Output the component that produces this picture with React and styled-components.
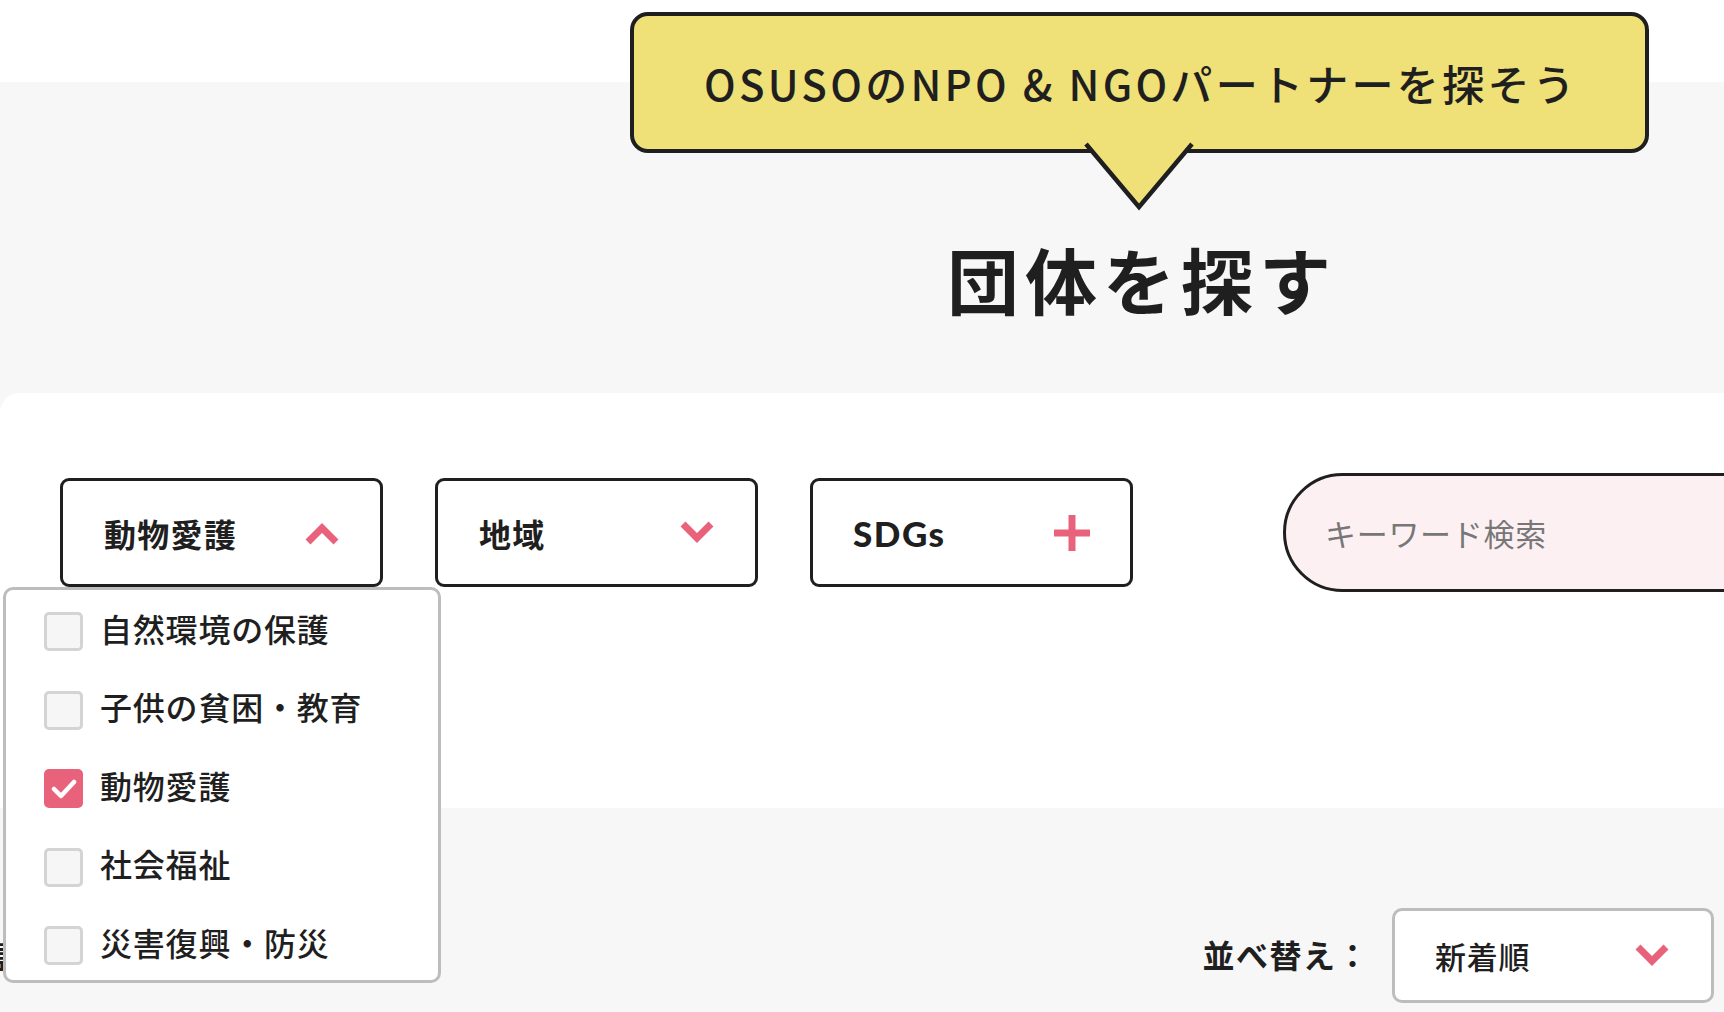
import React from 'react';
import styled, { createGlobalStyle } from 'styled-components';

const PINK = '#e9627b';
const INK = '#1f1f1f';

const Global = createGlobalStyle`
  html, body { margin: 0; padding: 0; }
  body {
    background: #f7f7f7;
    font-family: "Noto Sans CJK JP", "Noto Sans", sans-serif;
    color: ${INK};
  }
  * { box-sizing: border-box; }
`;

const Page = styled.div`
  width: 1724px;
  height: 1012px;
  overflow: hidden;
  background: #f7f7f7;
`;

const Hero = styled.header`
  display: flex;
  flex-direction: column;
  align-items: center;
  padding: 12px 0 79px 554px;
  background: linear-gradient(to bottom, #fff 0, #fff 82px, #f7f7f7 82px);
`;

const Bubble = styled.div`
  position: relative;
  width: 1019px;
  height: 141px;
  border: 4px solid ${INK};
  border-radius: 18px;
  background: #efe078;
  display: flex;
  align-items: center;
  justify-content: center;
  padding-left: 4px;
  font-size: 42px;
  font-weight: 500;
  letter-spacing: 3.3px;
`;

const Tail = styled.svg`
  position: absolute;
  left: 50%;
  top: calc(100% - 4px);
  transform: translateX(-50%);
  overflow: visible;
`;

const Title = styled.h1`
  margin: 89px 0 0;
  padding-left: 6px;
  font-size: 72px;
  line-height: 1;
  font-weight: 700;
  letter-spacing: 6px;
`;

const Card = styled.section`
  height: 415px;
  background: #fff;
  border-radius: 20px 0 0 0;
  padding: 80px 0 0 60px;
`;

const FilterRow = styled.div`
  display: flex;
  align-items: center;
  gap: 52px;
`;

const FilterWrap = styled.div`
  position: relative;
  flex-shrink: 0;
`;

const FilterButton = styled.div`
  width: 323px;
  height: 109px;
  border: 3px solid ${INK};
  border-radius: 9px;
  background: #fff;
  display: flex;
  align-items: center;
  justify-content: space-between;
  padding: 0 40px 0 ${p => (p.$latin ? '40px' : '41px')};
  font-size: ${p => (p.$latin ? '35px' : '32px')};
  letter-spacing: ${p => (p.$latin ? '1.5px' : '1.3px')};
  font-family: ${p => (p.$latin ? '"Lato", "Noto Sans", sans-serif' : 'inherit')};
  font-weight: ${p => (p.$latin ? 900 : 700)};
`;

const SearchInput = styled.input`
  flex-shrink: 0;
  margin-left: 98px;
  width: 700px;
  height: 119px;
  border: 3px solid ${INK};
  border-radius: 60px;
  background: #fdf0f2;
  padding: 0 0 0 39px;
  font-family: "Noto Sans CJK JP", "Noto Sans", sans-serif;
  font-size: 31px;
  letter-spacing: 0.7px;
  color: ${INK};
  outline: none;
  &::placeholder { color: #777; }
`;

const Panel = styled.div`
  position: absolute;
  left: -57px;
  top: 100%;
  width: 438px;
  height: 396px;
  z-index: 5;
  background: #fff;
  border: 3px solid #bdbdbd;
  border-radius: 10px;
  padding: 22px 0 0 38px;
  display: flex;
  flex-direction: column;
  gap: 39.5px;
`;

const Option = styled.label`
  display: flex;
  align-items: center;
  gap: 17px;
  height: 39px;
  white-space: nowrap;
`;

const OptionText = styled.span`
  font-size: 32px;
  font-weight: 500;
  letter-spacing: 0.8px;
  line-height: 1;
  margin-bottom: 8px;
`;

const Box = styled.span`
  width: 39px;
  height: 39px;
  flex-shrink: 0;
  border-radius: 5px;
  border: 3px solid ${p => (p.$checked ? PINK : '#d4d4d4')};
  background: ${p => (p.$checked ? PINK : '#f6f6f6')};
  display: flex;
  align-items: center;
  justify-content: center;
`;

const SortBar = styled.div`
  display: flex;
  align-items: center;
  justify-content: space-between;
  padding: 100px 10px 0 0;
`;

const ResultCount = styled.div`
  margin-left: -8px;
  font-size: 31px;
  font-weight: 700;
`;

const SortGroup = styled.div`
  display: flex;
  align-items: center;
  gap: 22px;
`;

const SortLabel = styled.span`
  font-size: 32px;
  font-weight: 700;
  letter-spacing: 1.5px;
  margin-bottom: 4px;
`;

const SortSelect = styled.div`
  width: 322px;
  height: 95px;
  border: 3px solid #bdbdbd;
  border-radius: 10px;
  background: #fff;
  display: flex;
  align-items: center;
  justify-content: space-between;
  padding: 0 41px 0 40px;
  font-size: 31px;
  font-weight: 500;
  letter-spacing: 0.8px;
`;

const Chevron = ({ up }) => (
  <svg width="36" height="24" viewBox="0 0 36 24">
    <polyline
      points={up ? '4,21 18,7 32,21' : '4,3 18,17 32,3'}
      fill="none"
      stroke={PINK}
      strokeWidth="7"
      strokeLinejoin="miter"
    />
  </svg>
);

const Plus = () => (
  <svg width="36" height="36" viewBox="0 0 36 36">
    <path d="M18 0V36M0 18H36" stroke={PINK} strokeWidth="7" fill="none" />
  </svg>
);

const Check = () => (
  <svg width="26" height="22" viewBox="0 0 26 22">
    <polyline points="3,11 10,18 23,4" fill="none" stroke="#fff" strokeWidth="4.5" strokeLinecap="round" strokeLinejoin="round" />
  </svg>
);

const categories = [
  { label: '自然環境の保護', checked: false },
  { label: '子供の貧困・教育', checked: false },
  { label: '動物愛護', checked: true },
  { label: '社会福祉', checked: false },
  { label: '災害復興・防災', checked: false },
];

export default function App() {
  return (
    <Page>
      <Global />
      <Hero>
        <Bubble>
          OSUSOのNPO & NGOパートナーを探そう
          <Tail width="116" height="66" viewBox="0 0 116 66">
            <polygon points="5,0 58,62 111,0" fill="#efe078" />
            <polyline points="5,-1 58,62 111,-1" fill="none" stroke={INK} strokeWidth="4.5" strokeLinejoin="miter" />
          </Tail>
        </Bubble>
        <Title>団体を探す</Title>
      </Hero>

      <Card>
        <FilterRow>
          <FilterWrap>
            <FilterButton>
              動物愛護
              <Chevron up />
            </FilterButton>
            <Panel>
              {categories.map(c => (
                <Option key={c.label}>
                  <Box $checked={c.checked}>{c.checked && <Check />}</Box>
                  <OptionText>{c.label}</OptionText>
                </Option>
              ))}
            </Panel>
          </FilterWrap>
          <FilterWrap>
            <FilterButton>
              地域
              <Chevron />
            </FilterButton>
          </FilterWrap>
          <FilterWrap>
            <FilterButton $latin>
              SDGs
              <Plus />
            </FilterButton>
          </FilterWrap>
          <SearchInput placeholder="キーワード検索" />
        </FilterRow>
      </Card>

      <SortBar>
        <ResultCount>該当団体数：12件</ResultCount>
        <SortGroup>
          <SortLabel>並べ替え：</SortLabel>
          <SortSelect>
            新着順
            <Chevron />
          </SortSelect>
        </SortGroup>
      </SortBar>
    </Page>
  );
}
